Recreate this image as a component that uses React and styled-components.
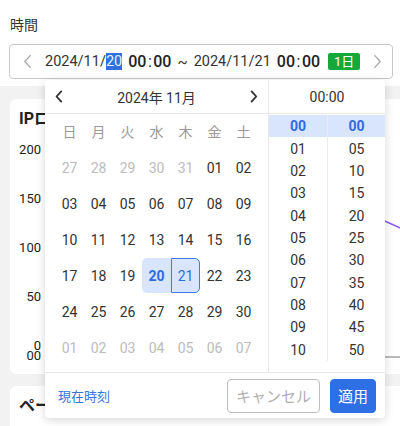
import React from 'react';
import styled, { createGlobalStyle } from 'styled-components';

const GlobalStyle = createGlobalStyle`
  html, body {
    margin: 0;
    overflow: hidden;
    background: #f2f2f2;
    font-family: Roboto, "Noto Sans CJK JP", sans-serif;
    color: #333;
  }
  * {
    box-sizing: border-box;
  }
`;

const Header = styled.div`
  background: #fff;
  padding: 15px 7px 7px 9px;
`;

const FieldLabel = styled.div`
  font-size: 14px;
  line-height: 20px;
  padding-left: 1px;
  margin-bottom: 9px;
`;

const RangeInput = styled.div`
  position: relative;
  height: 35px;
  border: 1px solid #c8c8c8;
  border-radius: 4px;
  display: flex;
  align-items: center;
  background: #fff;
  white-space: nowrap;
`;

const ArrowBox = styled.div`
  width: ${(p) => p.$w || 34}px;
  height: 100%;
  flex-shrink: 0;
  display: flex;
  align-items: center;
  justify-content: center;
  color: ${(p) => (p.$dark ? '#333' : '#aaa')};
  margin-left: ${(p) => (p.$end ? 'auto' : '0')};
`;

const DateText = styled.span`
  flex-shrink: 0;
  font-size: 14.5px;
  color: #333;
`;

const Selected = styled.span`
  background: #2f6fe0;
  color: #e6efff;
`;

const TimeText = styled.span`
  flex-shrink: 0;
  font-size: 16px;
  font-weight: 500;
  color: #222;
  margin: 0 6px;
`;

const Colon = styled.span`
  font-weight: 400;
  margin: 0 1.5px;
`;

const Tilde = styled.span`
  flex-shrink: 0;
  font-size: 15px;
  margin-right: 6px;
`;

const Badge = styled.span`
  flex-shrink: 0;
  background: #17a83c;
  color: #fff;
  font-size: 13px;
  line-height: 17px;
  padding: 0 6px;
  border-radius: 2px;
  margin-left: 2px;
`;

const Popover = styled.div`
  position: absolute;
  top: calc(100% + 2px);
  left: 35px;
  width: 340px;
  height: 338px;
  background: #fff;
  border-radius: 4px;
  box-shadow: 0 2px 10px rgba(0, 0, 0, 0.16);
  display: flex;
  flex-direction: column;
  z-index: 10;
  white-space: normal;
`;

const PopMain = styled.div`
  display: flex;
  height: 292px;
`;

const Calendar = styled.div`
  width: 224px;
  border-right: 1px solid #e8e8e8;
`;

const PanelHead = styled.div`
  height: 34px;
  border-bottom: 1px solid #e8e8e8;
  display: flex;
  align-items: center;
  justify-content: ${(p) => (p.$center ? 'center' : 'space-between')};
  font-size: 14px;
  color: #333;
  padding: 0 7px;
`;

const DayGrid = styled.div`
  display: grid;
  grid-template-columns: repeat(7, 29px);
  grid-template-rows: 36px repeat(6, 36px);
  padding: 0 10px;
`;

const WeekDay = styled.div`
  display: flex;
  align-items: center;
  justify-content: center;
  font-size: 14px;
  color: #999;
  padding-bottom: 2px;
`;

const Day = styled.div`
  display: flex;
  align-items: center;
  justify-content: center;
  font-size: 14px;
  color: ${(p) => (p.$active ? '#2d6de0' : p.$muted ? '#bcbcbc' : '#333')};
  font-weight: ${(p) => (p.$start ? 700 : 400)};
  background: ${(p) => (p.$active ? '#d8e5fd' : 'transparent')};
  border: 1px solid ${(p) => (p.$end ? '#3d7be6' : 'transparent')};
  border-radius: ${(p) => (p.$start ? '5px 0 0 5px' : p.$end ? '0 5px 5px 0' : '0')};
  margin: ${(p) => (p.$active ? '0 0 1px' : '0')};
`;

const TimePanel = styled.div`
  flex: 1;
  display: flex;
  flex-direction: column;
`;

const TimeCols = styled.div`
  display: flex;
  height: 247px;
  padding-top: 1px;
`;

const TimeCol = styled.div`
  flex: ${(p) => (p.$first ? '0 0 59px' : '1')};
  border-right: ${(p) => (p.$first ? '1px solid #ececec' : 'none')};
  overflow: hidden;
`;

const TimeCell = styled.div`
  height: 22.35px;
  display: flex;
  align-items: center;
  justify-content: center;
  font-size: 14px;
  color: ${(p) => (p.$active ? '#2d6de0' : '#333')};
  font-weight: ${(p) => (p.$active ? 700 : 400)};
  background: ${(p) => (p.$active ? '#d8e5fd' : 'transparent')};
`;

const Footer = styled.div`
  flex: 1;
  border-top: 1px solid #e8e8e8;
  display: flex;
  align-items: center;
  padding: 0 9px 0 13px;
  gap: 10px;
`;

const NowLink = styled.span`
  font-size: 13px;
  color: #3874e0;
  margin-right: auto;
`;

const Button = styled.button`
  height: 34px;
  padding: 0 ${(p) => (p.$primary ? '7px' : '8px')};
  font-family: inherit;
  font-size: 15px;
  border-radius: 4px;
  border: 1px solid ${(p) => (p.$primary ? '#2f6fe6' : '#bdbdbd')};
  background: ${(p) => (p.$primary ? '#2f6fe6' : '#fff')};
  color: ${(p) => (p.$primary ? '#fff' : '#b0b0b0')};
`;

const Content = styled.div`
  padding: 13px 0 0 10px;
  display: flex;
  flex-direction: column;
  gap: 12px;
`;

const Card = styled.div`
  width: calc(100% + 12px);
  height: ${(p) => p.$h}px;
  background: #fff;
  border-radius: 6px;
  padding: 10px 0 0 9px;
`;

const CardTitle = styled.div`
  font-size: 16px;
  font-weight: 700;
  line-height: 20px;
  color: #222;
  white-space: nowrap;
`;

const ChartRow = styled.div`
  display: flex;
  align-items: flex-start;
  margin-top: 13px;
`;

const YAxis = styled.div`
  width: 22px;
  display: flex;
  flex-direction: column;
  align-items: flex-end;
  gap: 33px;
  font-size: 13px;
  line-height: 16px;
  color: #222;
`;

const XTick = styled.span`
  margin-top: -39px;
`;

const ChartSvg = styled.svg`
  flex-shrink: 0;
  margin-left: 4px;
  overflow: visible;
`;

const Chevron = ({ dir, size = 14, w = 1.5 }) => (
  <svg width={size * 0.6} height={size} viewBox="0 0 8 14">
    <polyline
      points={dir === 'left' ? '6.5,1.5 1.5,7 6.5,12.5' : '1.5,1.5 6.5,7 1.5,12.5'}
      fill="none"
      stroke="currentColor"
      strokeWidth={w}
      strokeLinecap="round"
      strokeLinejoin="round"
    />
  </svg>
);

const weekDays = ['日', '月', '火', '水', '木', '金', '土'];

const buildDays = () => {
  const days = [];
  [27, 28, 29, 30, 31].forEach((d) => days.push({ d, muted: true }));
  for (let d = 1; d <= 30; d++) days.push({ d });
  for (let d = 1; d <= 7; d++) days.push({ d, muted: true });
  return days;
};

const pad = (n) => String(n).padStart(2, '0');

const hours = Array.from({ length: 11 }, (_, i) => pad(i));
const minutes = Array.from({ length: 11 }, (_, i) => pad(i * 5));

const App = () => {
  const days = buildDays();

  return (
    <>
      <GlobalStyle />
      <Header>
        <FieldLabel>時間</FieldLabel>
        <RangeInput>
          <ArrowBox $w={35}>
            <Chevron dir="left" size={15} w={1.3} />
          </ArrowBox>
          <DateText>
            2024/11/<Selected>20</Selected>
          </DateText>
          <TimeText>
            00<Colon>:</Colon>00
          </TimeText>
          <Tilde>~</Tilde>
          <DateText>2024/11/21</DateText>
          <TimeText>
            00<Colon>:</Colon>00
          </TimeText>
          <Badge>1日</Badge>
          <ArrowBox $end>
            <Chevron dir="right" size={15} w={1.3} />
          </ArrowBox>

          <Popover>
            <PopMain>
              <Calendar>
                <PanelHead>
                  <ArrowBox $dark $w={14}>
                    <Chevron dir="left" size={13} w={2} />
                  </ArrowBox>
                  <span>2024年 11月</span>
                  <ArrowBox $dark $w={14}>
                    <Chevron dir="right" size={13} w={2} />
                  </ArrowBox>
                </PanelHead>
                <DayGrid>
                  {weekDays.map((w) => (
                    <WeekDay key={w}>{w}</WeekDay>
                  ))}
                  {days.map((item, i) => {
                    const start = !item.muted && item.d === 20;
                    const end = !item.muted && item.d === 21;
                    return (
                      <Day
                        key={i}
                        $muted={item.muted}
                        $active={start || end}
                        $start={start}
                        $end={end}
                      >
                        {pad(item.d)}
                      </Day>
                    );
                  })}
                </DayGrid>
              </Calendar>
              <TimePanel>
                <PanelHead $center>00:00</PanelHead>
                <TimeCols>
                  <TimeCol $first>
                    {hours.map((h, i) => (
                      <TimeCell key={h} $active={i === 0}>
                        {h}
                      </TimeCell>
                    ))}
                  </TimeCol>
                  <TimeCol>
                    {minutes.map((m, i) => (
                      <TimeCell key={m} $active={i === 0}>
                        {m}
                      </TimeCell>
                    ))}
                  </TimeCol>
                </TimeCols>
              </TimePanel>
            </PopMain>
            <Footer>
              <NowLink>現在時刻</NowLink>
              <Button>キャンセル</Button>
              <Button $primary>適用</Button>
            </Footer>
          </Popover>
        </RangeInput>
      </Header>

      <Content>
        <Card $h={275}>
          <CardTitle>IPログ件数</CardTitle>
          <ChartRow>
            <YAxis>
              <span>200</span>
              <span>150</span>
              <span>100</span>
              <span>50</span>
              <span>0</span>
              <XTick>00</XTick>
            </YAxis>
            <ChartSvg width="360" height="220">
              <polyline
                points="200,20 270,47 342,80 380,97"
                fill="none"
                stroke="#8b5cf6"
                strokeWidth="1.5"
              />
              <line x1="0" y1="215" x2="360" y2="215" stroke="#777" strokeWidth="1" />
            </ChartSvg>
          </ChartRow>
        </Card>
        <Card $h={80}>
          <CardTitle>ページ別件数</CardTitle>
        </Card>
      </Content>
    </>
  );
};

export default App;
